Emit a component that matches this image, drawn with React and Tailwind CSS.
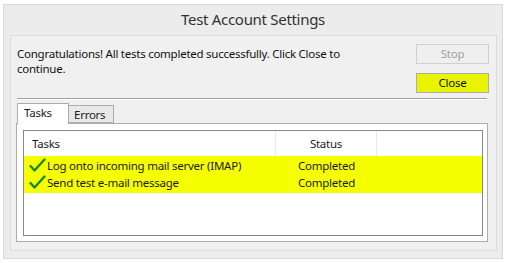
import React from "react";

function Check() {
  return (
    <svg width="17" height="15" viewBox="0 0 17 15" className="shrink-0">
      <path d="M1.5 8 L5.5 12.5 L15.5 1.5" fill="none" stroke="#12871e" strokeWidth="2.3" strokeLinecap="round" strokeLinejoin="round" />
    </svg>
  );
}

export default function App() {
  const rows = [
    "Log onto incoming mail server (IMAP)",
    "Send test e-mail message",
  ];
  return (
    <div className="w-[508px] h-[263px] bg-white pt-[4px] pl-[3px] text-[11.5px] tracking-[-0.25px] text-[#1a1a1a]" style={{ fontFamily: '"Noto Sans", sans-serif' }}>
      <div className="w-[500px] h-[255px] border border-[#d9d9d9] bg-[#ececec] flex flex-col">
        <div className="h-[30px] flex items-center justify-center text-[15px] tracking-[-0.3px] text-[#333] leading-none pb-[2px]">
          Test Account Settings
        </div>
        <div className="ml-[6px] w-[487px] h-[216px] border border-[#dcdcdc] bg-[#f0f0f0] flex flex-col pl-[5px] pt-[8px]">
          <div className="flex">
            <div className="flex-1 pl-[1px] pt-[2px] leading-[15px] text-[#111]">
              Congratulations! All tests completed successfully. Click Close to continue.
            </div>
            <div className="w-[73px] mr-[7px] ml-[60px] flex flex-col gap-[9px] shrink-0">
              <div className="h-[20px] border border-[#d0d0d0] bg-[#efefef] text-[#a0a0a0] flex items-center justify-center">Stop</div>
              <div className="h-[20px] border border-[#adadad] bg-[#e9f500] text-[#111] flex items-center justify-center">Close</div>
            </div>
          </div>
          <div className="ml-[1px] mr-[9px] mt-[5px] h-[2px] border-t border-[#a0a0a0] border-b border-b-white" />
          <div className="flex mt-[3px] ml-[1px] relative z-10 items-end">
            <div className="w-[52px] h-[21px] border border-[#adadad] border-b-0 bg-white pl-[6px] leading-[18px] -mb-px">Tasks</div>
            <div className="w-[45px] h-[18px] border border-[#adadad] border-l-0 bg-[#e9e9e9] pl-[5px] leading-[17px]">Errors</div>
          </div>
          <div className="w-[472px] h-[119px] border border-[#adadad] bg-white pl-[6px] pt-[6px]">
            <div className="w-[460px] h-[106px] border border-[#828790] bg-white flex flex-col">
              <div className="h-[25px] flex items-center shrink-0">
                <div className="w-[252px] pl-[8px] h-full flex items-center border-r border-[#e5eaf0]">Tasks</div>
                <div className="w-[101px] h-full flex items-center justify-center border-r border-[#e5eaf0]">Status</div>
              </div>
              <div className="bg-[#f5ff00] pt-[1px] pb-[2px]">
                {rows.map((r) => (
                  <div key={r} className="h-[17px] flex items-center">
                    <div className="w-[252px] pl-[5px] flex items-center gap-[1px]">
                      <Check />
                      <span>{r}</span>
                    </div>
                    <div className="w-[101px] text-center">Completed</div>
                  </div>
                ))}
              </div>
            </div>
          </div>
        </div>
      </div>
    </div>
  );
}
